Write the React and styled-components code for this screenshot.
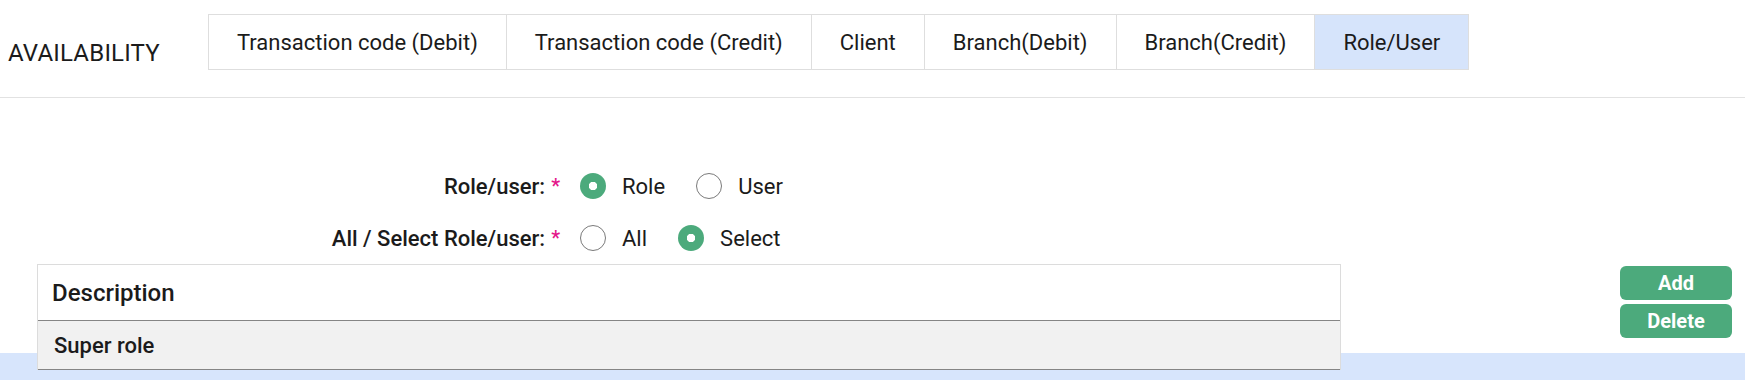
import React, { useState } from "react";
import styled, { createGlobalStyle } from "styled-components";

const GlobalStyle = createGlobalStyle`
  html, body {
    margin: 0;
    padding: 0;
  }
  body {
    font-family: Roboto, "Liberation Sans", sans-serif;
    color: #1b1b1b;
    background: #fff;
  }
  * {
    box-sizing: border-box;
  }
`;

const Page = styled.div`
  min-height: 380px;
  background: linear-gradient(to bottom, #fff 353px, #d7e5fc 353px);
`;

const Header = styled.header`
  display: flex;
  align-items: flex-start;
  height: 98px;
  padding-top: 14px;
  border-bottom: 1px solid #e2e2e2;
`;

const Title = styled.h1`
  width: 208px;
  margin: 25px 0 0;
  padding-left: 8px;
  font-size: 24px;
  line-height: 28px;
  font-weight: 400;
  letter-spacing: 0.2px;
`;

const Tabs = styled.nav`
  display: flex;
  height: 56px;
  border: 1px solid #dedede;
`;

const Tab = styled.div`
  display: flex;
  align-items: center;
  padding: 0 28px;
  font-size: 22px;
  cursor: pointer;
  background: ${({ $active }) => ($active ? "#d6e4fb" : "#fff")};
  & + & {
    border-left: 1px solid #dedede;
  }
`;

const Form = styled.div`
  padding-top: 62px;
`;

const Row = styled.div`
  display: flex;
  align-items: center;
  height: 52px;
`;

const Label = styled.label`
  width: 560px;
  margin-right: 20px;
  text-align: right;
  font-size: 22px;
  font-weight: 500;
`;

const Required = styled.span`
  margin-left: 6px;
  color: #e4178a;
  font-size: 20px;
  vertical-align: top;
`;

const Option = styled.label`
  display: flex;
  align-items: center;
  margin-right: 31px;
  font-size: 22px;
  cursor: pointer;
`;

const RadioDot = styled.span`
  width: 26px;
  height: 26px;
  margin-right: 16px;
  border-radius: 50%;
  border: ${({ $checked }) => ($checked ? "none" : "1px solid #7a7a7a")};
  background: ${({ $checked }) =>
    $checked
      ? "radial-gradient(circle, #fff 0 4px, #4caa7c 4.5px)"
      : "#fff"};
`;

const Bottom = styled.div`
  display: flex;
  justify-content: space-between;
  align-items: flex-start;
  padding: 0 13px 0 37px;
`;

const Table = styled.div`
  width: 1304px;
  border: 1px solid #dcdcdc;
  border-bottom: none;
`;

const HeadCell = styled.div`
  display: flex;
  align-items: center;
  height: 56px;
  padding-left: 14px;
  font-size: 24px;
  font-weight: 500;
  background: #fff;
  border-bottom: 1px solid #858585;
`;

const BodyCell = styled.div`
  display: flex;
  align-items: center;
  height: 49px;
  padding-left: 16px;
  font-size: 22px;
  font-weight: 500;
  background: #f1f1f1;
  border-bottom: 1px solid #858585;
`;

const Actions = styled.div`
  display: flex;
  flex-direction: column;
  gap: 4px;
  margin-top: 2px;
`;

const Button = styled.button`
  width: 112px;
  height: 34px;
  border: none;
  border-radius: 6px;
  background: #4caa7c;
  color: #fff;
  font-family: Roboto, "Liberation Sans", sans-serif;
  font-size: 20px;
  font-weight: 700;
  cursor: pointer;
`;

const tabs = [
  "Transaction code (Debit)",
  "Transaction code (Credit)",
  "Client",
  "Branch(Debit)",
  "Branch(Credit)",
  "Role/User",
];

const RadioGroup = ({ options, value, onChange }) => (
  <>
    {options.map((opt) => (
      <Option key={opt} onClick={() => onChange(opt)}>
        <RadioDot $checked={value === opt} />
        {opt}
      </Option>
    ))}
  </>
);

export default function App() {
  const [activeTab, setActiveTab] = useState("Role/User");
  const [kind, setKind] = useState("Role");
  const [scope, setScope] = useState("Select");

  return (
    <Page>
      <GlobalStyle />
      <Header>
        <Title>AVAILABILITY</Title>
        <Tabs>
          {tabs.map((t) => (
            <Tab key={t} $active={t === activeTab} onClick={() => setActiveTab(t)}>
              {t}
            </Tab>
          ))}
        </Tabs>
      </Header>

      <Form>
        <Row>
          <Label>
            Role/user:<Required>*</Required>
          </Label>
          <RadioGroup options={["Role", "User"]} value={kind} onChange={setKind} />
        </Row>
        <Row>
          <Label>
            All / Select Role/user:<Required>*</Required>
          </Label>
          <RadioGroup options={["All", "Select"]} value={scope} onChange={setScope} />
        </Row>
      </Form>

      <Bottom>
        <Table>
          <HeadCell>Description</HeadCell>
          <BodyCell>Super role</BodyCell>
        </Table>
        <Actions>
          <Button>Add</Button>
          <Button>Delete</Button>
        </Actions>
      </Bottom>
    </Page>
  );
}
